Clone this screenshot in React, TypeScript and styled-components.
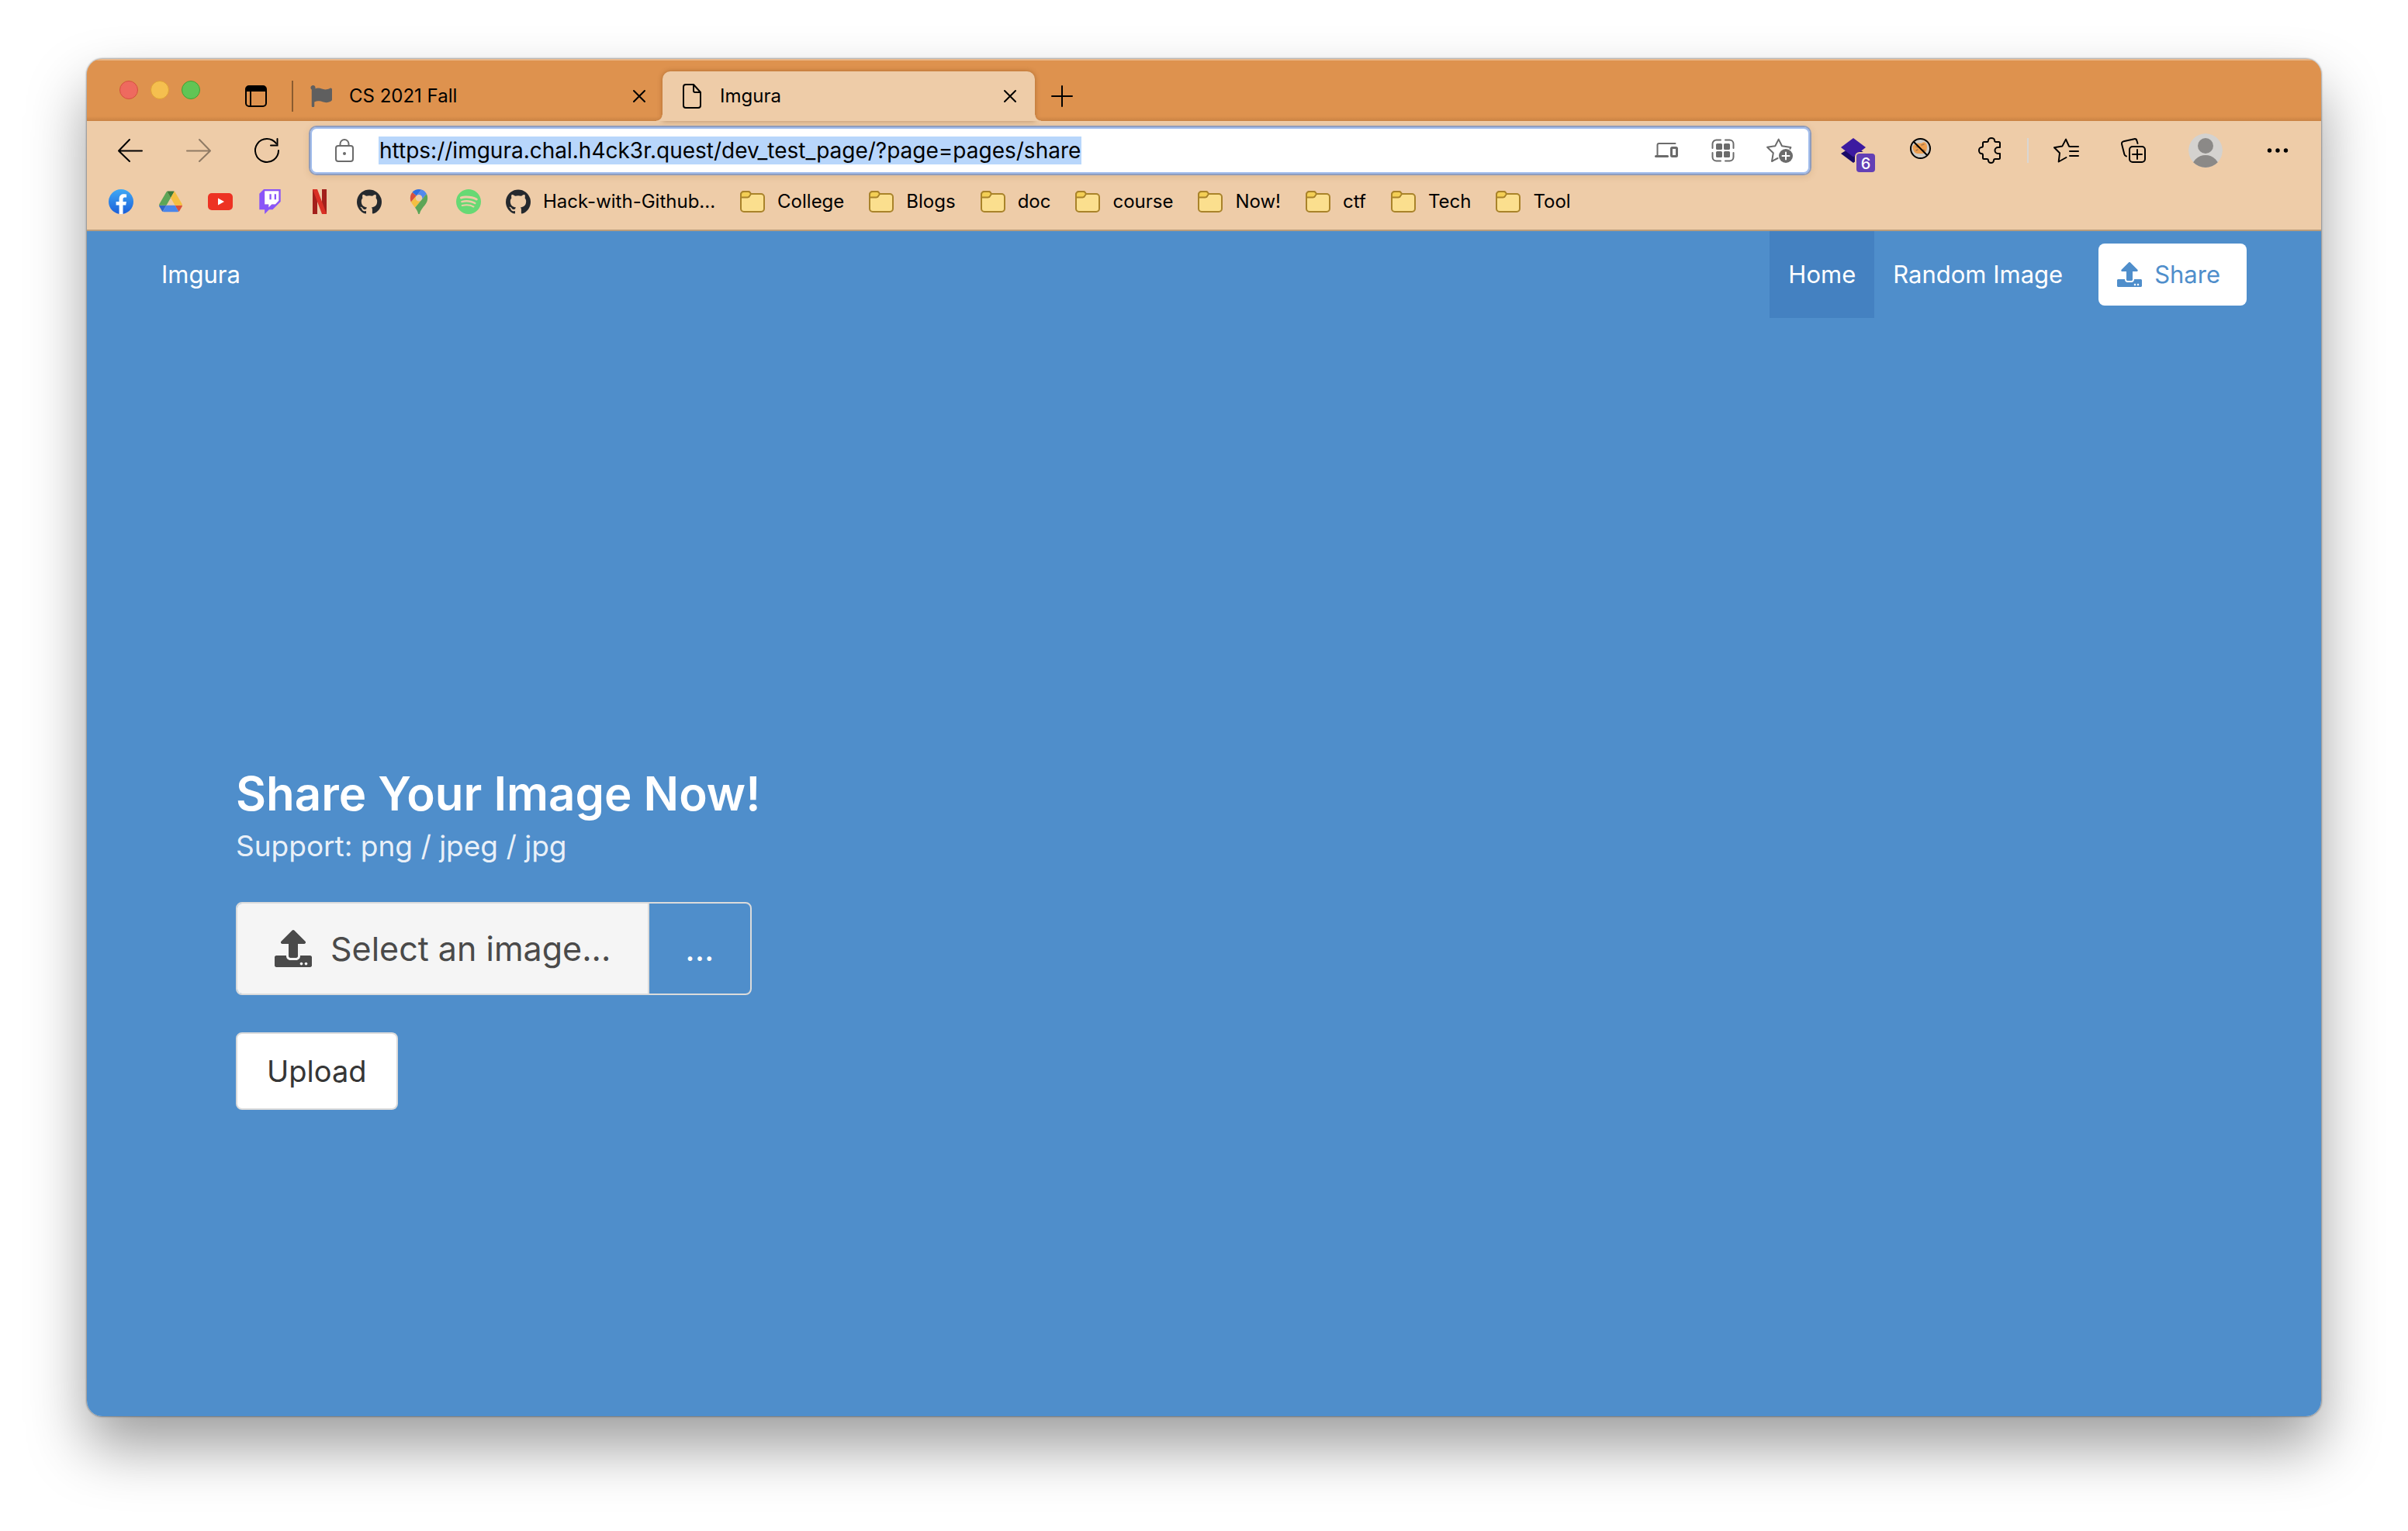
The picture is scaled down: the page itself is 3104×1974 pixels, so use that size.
import React from 'react';
import styled, { createGlobalStyle, css } from 'styled-components';
import { FaFlag, FaUpload } from 'react-icons/fa';
import { SiGithub, SiSpotify } from 'react-icons/si';

const GlobalStyle = createGlobalStyle`
  *, *::before, *::after { box-sizing: border-box; }
  body { margin: 0; background: #fff; font-family: Inter, "Liberation Sans", sans-serif; color: #000; }
  button, input { font: inherit; color: inherit; }
  button { border: 0; padding: 0; background: none; cursor: pointer; }
  a { color: inherit; text-decoration: none; }
  svg { display: block; flex: none; }
`;

const Desktop = styled.div`
  min-height: 100vh;
  display: flex;
  padding: 76px 112px 148px;
`;

const Window = styled.div`
  flex: 1;
  min-width: 0;
  display: flex;
  flex-direction: column;
  overflow: hidden;
  border-radius: 20px;
  box-shadow: 0 0 2px 1px rgba(0, 0, 0, 0.32), 0 40px 76px rgba(0, 0, 0, 0.38);
`;

/* ---- Title bar and tabs ---- */

const TitleBar = styled.header`
  height: 80px;
  display: flex;
  align-items: flex-end;
  padding-left: 42px;
  background: linear-gradient(#de924e 74px, #c98343) #de924e;
  box-shadow: inset 0 2px 0 rgba(255, 255, 255, 0.35);
`;

const Lights = styled.div`
  display: flex;
  align-self: center;
  gap: 16px;
  margin-right: 58px;
`;

const Light = styled.button<{ $fill: string; $edge: string }>`
  width: 24px;
  height: 24px;
  border-radius: 50%;
  background: ${(p) => p.$fill};
  border: 1px solid ${(p) => p.$edge};
`;

const BarButton = styled.button`
  height: 64px;
  display: flex;
  align-items: center;
`;

const TabDivider = styled.span`
  width: 2px;
  height: 40px;
  margin: 0 0 12px 32px;
  background: #8a5b30;
`;

const Tab = styled.div<{ $active?: boolean }>`
  position: relative;
  width: 476px;
  height: 64px;
  display: flex;
  align-items: center;
  gap: 20px;
  padding: 0 22px 0 20px;
  font-size: 24px;
  line-height: 32px;
  ${(p) =>
    p.$active &&
    css`
      width: 480px;
      padding: 0 24px 0 22px;
      background: #eecca8;
      border-radius: 10px 10px 0 0;
      box-shadow: 0 0 6px rgba(110, 60, 10, 0.45);
      &::before,
      &::after {
        content: '';
        position: absolute;
        bottom: 0;
        width: 8px;
        height: 8px;
      }
      &::before {
        left: -8px;
        background: radial-gradient(circle at 0 0, transparent 7px, #eecca8 8px);
      }
      &::after {
        right: -8px;
        background: radial-gradient(circle at 100% 0, transparent 7px, #eecca8 8px);
      }
    `}
`;

const TabIcon = styled.span`
  width: 32px;
  display: flex;
  justify-content: center;
`;

const TabLabel = styled.span`
  flex: 1;
`;

const NewTab = styled(BarButton)`
  margin-left: 21px;
`;

/* ---- Toolbar ---- */

const Chrome = styled.div`
  background: #eecca8;
  border-bottom: 2px solid #b99c7c;
  padding-bottom: 8px;
`;

const Toolbar = styled.div`
  height: 76px;
  display: flex;
  align-items: center;
  padding: 0 40px;
`;

const NavButtons = styled.div`
  display: flex;
  gap: 56px;
  margin-right: 38px;
`;

const AddressBar = styled.form`
  flex: 1;
  min-width: 0;
  height: 64px;
  display: flex;
  align-items: center;
  padding: 0 22px 0 32px;
  background: #fff;
  border: 2px solid #8f9cbc;
  border-radius: 10px;
  box-shadow: inset 0 0 0 2px #a0bcec, 0 2px 8px rgba(120, 80, 30, 0.15);
`;

const AddressField = styled.label`
  flex: 1;
  min-width: 0;
  display: flex;
  align-items: center;
  gap: 32px;
`;

const AddressInput = styled.input`
  field-sizing: content;
  height: 36px;
  padding: 0 1px;
  border: 0;
  outline: 0;
  background: #b8d6fb;
  font-size: 28px;
  line-height: 36px;
`;

const AddressActions = styled.div`
  display: flex;
  gap: 42px;
`;

const Extensions = styled.div`
  display: flex;
  align-items: center;
  gap: 56px;
  margin-left: 38px;
`;

const ToolDivider = styled.span`
  width: 2px;
  height: 32px;
  margin: 0 32px;
  background: #d9d7d3;
`;

const Tools = styled.div`
  display: flex;
  align-items: center;
  gap: 55px;
`;

const BadgeHost = styled.button`
  position: relative;
`;

const Badge = styled.span`
  position: absolute;
  left: 20px;
  top: 20px;
  width: 24px;
  height: 24px;
  border-radius: 4px;
  background: #6340b5;
  box-shadow: 0 0 0 2px #eecca8;
  color: #fff;
  font-size: 20px;
  font-weight: 500;
  line-height: 26px;
  text-align: center;
`;

const Bookmarks = styled.nav`
  height: 56px;
  display: flex;
  align-items: center;
  gap: 32px;
  padding: 0 28px;
  font-size: 24px;
  line-height: 32px;
  white-space: nowrap;
`;

const Bookmark = styled.a`
  display: flex;
  align-items: center;
  gap: 16px;
`;

/* ---- Web page ---- */

const Page = styled.div`
  flex: 1;
  display: flex;
  flex-direction: column;
  background: #4f8ecb;
  color: #fff;
`;

const Navbar = styled.nav`
  height: 112px;
  display: flex;
  align-items: center;
  justify-content: space-between;
  padding: 0 96px;
  font-size: 31px;
  line-height: 48px;
`;

const NavMenu = styled.div`
  display: flex;
  align-items: center;
`;

const NavItem = styled.a<{ $active?: boolean }>`
  height: 112px;
  display: flex;
  align-items: center;
  padding: 0 24px;
  background: ${(p) => (p.$active ? '#4481c1' : 'transparent')};
`;

const ShareLink = styled.a`
  height: 80px;
  display: flex;
  align-items: center;
  gap: 16px;
  margin-left: 22px;
  padding: 0 34px 0 24px;
  border-radius: 8px;
  background: #fff;
  color: #4f8ecb;
`;

const Hero = styled.main`
  flex: 1;
  display: flex;
  flex-direction: column;
  justify-content: center;
  align-items: flex-start;
  padding: 182px 192px 0;
`;

const Title = styled.h1`
  margin: 0 0 8px;
  font-size: 60px;
  font-weight: 600;
  line-height: 72px;
`;

const Subtitle = styled.p`
  margin: 0;
  font-size: 37px;
  line-height: 48px;
  color: rgba(255, 255, 255, 0.9);
`;

const UploadForm = styled.form`
  display: flex;
  flex-direction: column;
  align-items: flex-start;
  gap: 48px;
  margin-top: 48px;
`;

const FilePicker = styled.label`
  position: relative;
  height: 120px;
  display: flex;
  border: 2px solid #dbdbdb;
  border-radius: 8px;
  overflow: hidden;
  font-size: 43px;
  line-height: 64px;
  cursor: pointer;
`;

const FileInput = styled.input`
  position: absolute;
  inset: 0;
  opacity: 0;
  cursor: pointer;
`;

const FileCta = styled.span`
  display: flex;
  align-items: center;
  gap: 24px;
  padding: 0 48px;
  background: #f5f5f5;
  color: #4a4a4a;
`;

const FileName = styled.span`
  display: flex;
  align-items: center;
  padding: 0 46px;
  border-left: 2px solid #dbdbdb;
`;

const UploadButton = styled.button`
  height: 100px;
  padding: 0 38px;
  border: 2px solid #dbdbdb;
  border-radius: 8px;
  background: #fff;
  color: #363636;
  font-size: 38px;
  line-height: 60px;
`;

/* ---- Icons ---- */

type IconProps = { w?: number; h?: number; box?: string; color?: string; sw?: number; children: React.ReactNode };
const Icon = ({ w = 32, h = 32, box, color = '#000', sw = 2, children }: IconProps) => (
  <svg width={w} height={h} viewBox={box ?? `0 0 ${w} ${h}`} fill="none" stroke={color} strokeWidth={sw}
    strokeLinecap="round" strokeLinejoin="round" overflow="visible" aria-hidden="true">
    {children}
  </svg>
);

const CloseIcon = () => <Icon w={16} h={16}><path d="M1 1l14 14M15 1L1 15" /></Icon>;
const TabsIcon = () => (
  <Icon w={28} h={28}>
    <rect x="1" y="1" width="26" height="26" rx="4" />
    <path d="M1 8V5a4 4 0 0 1 4-4h18a4 4 0 0 1 4 4v3z" fill="#000" stroke="none" />
    <path d="M1 7h26" /><path d="M7 7v20" />
  </Icon>
);
const FileIcon = () => <Icon><path d="M8 1h10l9 10v17a3 3 0 0 1-3 3H8a3 3 0 0 1-3-3V4a3 3 0 0 1 3-3zM18 1.500v7.500a2 2 0 0 0 2 2h7" /></Icon>;
const BackIcon = () => <Icon><path d="M31 16.500H1M15 2L1 16.500 15 30" /></Icon>;
const ForwardIcon = () => <Icon color="#8f7a64"><path d="M1 16.500h30M17 2l14 14.500L17 30" /></Icon>;
const RefreshIcon = () => <Icon><path d="M31 16A15 15 0 1 1 28 7" /><path d="M29.500 1v8.500H21" strokeLinejoin="miter" /></Icon>;
const LockIcon = () => (
  <Icon w={24} h={30} color="#6b6b6b">
    <rect x="1" y="9" width="22" height="20" rx="3" />
    <path d="M6.500 9V6.500a5.500 5.500 0 0 1 11 0V9" />
    <circle cx="12" cy="19" r="2" fill="#6b6b6b" stroke="none" />
  </Icon>
);
const DevicesIcon = () => (
  <Icon color="#6b6b6b">
    <path d="M5.500 23V9a2 2 0 0 1 2-2h21" />
    <path d="M3.500 23.500h15" strokeWidth="3" />
    <rect x="23.500" y="12.500" width="7" height="11" rx="1" strokeWidth="3" />
  </Icon>
);
const GridIcon = () => (
  <Icon color="#6b6b6b">
    <path d="M2.500 13V7.500a5 5 0 0 1 5-5H13M19 2.500h5.500a5 5 0 0 1 5 5V13M29.500 19v5.500a5 5 0 0 1-5 5H19M13 29.500H7.500a5 5 0 0 1-5-5V19" />
    <g fill="#6b6b6b" stroke="none">
      <rect x="7" y="7" width="8" height="8" rx="1.500" /><rect x="17" y="7" width="8" height="8" rx="1.500" />
      <rect x="7" y="17" width="8" height="8" rx="1.500" /><rect x="17" y="17" width="8" height="8" rx="1.500" />
    </g>
  </Icon>
);
const StarAddIcon = () => (
  <Icon color="#6b6b6b">
    <path d="M28.500 13.800l.8-1.800L18 10.300 13.700 1.600 9.300 10.300-.9 11.800 6.800 19.300 5 30l7.500-4" />
    <circle cx="23" cy="23" r="9" fill="#6b6b6b" stroke="none" />
    <path d="M23 18.500v9M18.500 23h9" stroke="#fff" />
  </Icon>
);
const LayersIcon = () => (
  <Icon>
    <path d="M0 20l16-10 16 10-16 12z" fill="#190a66" stroke="none" />
    <path d="M0 12L16 0l16 12-16 12.500z" fill="#3c1aa0" stroke="none" />
  </Icon>
);
const CookieIcon = () => (
  <Icon>
    <circle cx="14.500" cy="13.500" r="12.500" fill="#cfcac2" />
    <path d="M6 9c3-4 8-1 11-3s6 1 6 5-1 9-6 9-9 1-11-3-2-6 0-8z" fill="#ee9f4f" stroke="none" />
    <path d="M9 11l3 1M16 9l3-1M9 16l2-1M18 15l2 1" stroke="#a8794d" strokeWidth="1.500" />
    <path d="M6 5l17 17" />
  </Icon>
);
const PuzzleIcon = () => (
  <Icon>
    <path d="M8.500 5H12a2 2 0 0 0 2-2 4 3 0 0 1 8 0 2 2 0 0 0 2 2h3.500A1.500 1.500 0 0 1 29 6.500V12h-2.500a4 4 0 0 0 0 8H29v5.500a1.500 1.500 0 0 1-1.500 1.500H23a2 2 0 0 0-2 2 3.500 3 0 0 1-7 0 2 2 0 0 0-2-2H8.500A1.500 1.500 0 0 1 7 25.500V22a2 2 0 0 0-2-2 3 4 0 0 1 0-8 2 2 0 0 0 2-2V6.500A1.500 1.500 0 0 1 8.500 5z" />
  </Icon>
);
const FavoritesIcon = () => <Icon><path d="M20 10.500L16 1.600l-4.700 9L1 12.300l7 7L6.700 30.500 16.500 25M21 11h11M21 17h11M21 23h11" /></Icon>;
const CollectionsIcon = () => (
  <Icon>
    <path d="M21.500 7l-1-3.500A3 3 0 0 0 17 1.200L3.400 4.200A3 3 0 0 0 1.100 8l3.300 13a3.500 3.500 0 0 0 2.600 2.500" />
    <rect x="11" y="11" width="20" height="20" rx="4" /><path d="M21 15v12M15 21h12" />
  </Icon>
);
const AvatarIcon = () => (
  <Icon w={44} h={44}>
    <clipPath id="avatar"><circle cx="22" cy="22" r="22" /></clipPath>
    <g clipPath="url(#avatar)" stroke="none">
      <circle cx="22" cy="22" r="22" fill="#d4d2cf" />
      <circle cx="22" cy="16" r="10" fill="#8b8987" />
      <ellipse cx="22" cy="46" rx="18" ry="18" fill="#8b8987" />
    </g>
  </Icon>
);
const MoreIcon = () => (
  <Icon><g fill="#000" stroke="none"><circle cx="5.500" cy="16" r="2.700" /><circle cx="16" cy="16" r="2.700" /><circle cx="26.500" cy="16" r="2.700" /></g></Icon>
);
const FolderIcon = () => (
  <Icon h={28} color="#a9832a">
    <path d="M5 27h22a4 4 0 0 0 4-4V8a4 4 0 0 0-4-4H14l-1.500-2a2.500 2.500 0 0 0-2-1H5a4 4 0 0 0-4 4v18a4 4 0 0 0 4 4z" fill="#fbdf8e" />
    <path d="M1 8.500h8.500a3 3 0 0 0 2.300-1.200L14 4l-1.500-2a2.500 2.500 0 0 0-2-1H5a4 4 0 0 0-4 4z" fill="#f4cf55" />
  </Icon>
);
const FacebookIcon = () => (
  <Icon>
    <linearGradient id="fb" x1="0" y1="0" x2="0" y2="1"><stop stopColor="#3fa9f5" /><stop offset="1" stopColor="#1b5fd9" /></linearGradient>
    <circle cx="16" cy="16" r="16" fill="url(#fb)" stroke="none" />
    <path d="M22.200 20.600l.7-4.600h-4.400v-3c0-1.300.6-2.500 2.600-2.500h2V6.600s-1.800-.3-3.500-.3c-3.600 0-6 2.200-6 6.200V16h-4v4.600h4V32h4.900V20.600z" fill="#fff" stroke="none" />
  </Icon>
);
const DriveIcon = () => (
  <Icon box="-3 -7 93 93"><g stroke="none">
    <path fill="#2f65c8" d="m6.600 66.850 3.850 6.650c.8 1.400 1.950 2.500 3.300 3.300l13.750-23.800h-27.500c0 1.550.4 3.100 1.200 4.500z" />
    <path fill="#5ca557" d="m43.650 25-13.750-23.800c-1.350.8-2.500 1.900-3.300 3.300l-25.400 44a9.060 9.060 0 0 0 -1.200 4.500h27.500z" />
    <path fill="#d9513c" d="m73.550 76.800c1.350-.8 2.500-1.900 3.300-3.300l1.600-2.750 7.650-13.250c.8-1.400 1.200-2.950 1.200-4.500h-27.502l5.852 11.500z" />
    <path fill="#3a7a3a" d="m43.650 25 13.750-23.800c-1.350-.8-2.900-1.200-4.500-1.200h-18.500c-1.600 0-3.150.45-4.500 1.200z" />
    <path fill="#4a86ea" d="m59.800 53h-32.300l-13.750 23.800c1.350.8 2.900 1.200 4.500 1.200h50.800c1.600 0 3.150-.45 4.500-1.200z" />
    <path fill="#f5bf42" d="m73.400 26.500-12.700-22c-.8-1.400-1.950-2.500-3.300-3.300l-13.750 23.800 16.150 28h27.450c0-1.550-.4-3.100-1.200-4.500z" />
  </g></Icon>
);
const YoutubeIcon = () => (
  <Icon><g stroke="none"><rect y="5" width="32" height="22" rx="5" fill="#ed3223" /><path d="M13 11.500l8 4.500-8 4.500z" fill="#fff" /></g></Icon>
);
const TwitchIcon = () => (
  <Icon box="-200 0 2800 2800"><g stroke="none">
    <path fill="#fff" d="M2200 1300l-400 400h-400l-350 350v-350H600V200h1600z" />
    <path fill="#8a55f8" d="M500 0L0 500v1800h600v500l500-500h400l900-900V0zm1700 1300l-400 400h-400l-350 350v-350H600V200h1600zM1700 550h200v600h-200zM1150 550h200v600h-200z" />
  </g></Icon>
);
const NetflixIcon = () => (
  <Icon><g stroke="none"><path fill="#a3201b" d="M7 0h6v32H7zM19 0h6v32h-6z" /><path fill="#d93025" d="M7 0h6l12 32h-6z" /></g></Icon>
);
const MapsIcon = () => (
  <Icon box="-20 0 132.300 132.300"><g stroke="none">
    <path fill="#2f6fe0" d="M60.200 2.200C55.800.8 51 0 46.100 0 32 0 19.300 6.400 10.800 16.500l21.800 18.300L60.200 2.200z" />
    <path fill="#d9513c" d="M10.800 16.500C4.100 24.500 0 34.900 0 46.100c0 8.700 1.700 15.700 4.600 22l28-33.300-21.800-18.300z" />
    <path fill="#5189ee" d="M46.200 28.500c9.800 0 17.700 7.900 17.700 17.700 0 4.300-1.600 8.300-4.200 11.400 0 0 13.900-16.600 27.500-32.700-5.600-10.800-15.300-19-27-22.700L32.600 34.800c3.300-3.800 8.100-6.300 13.600-6.300" />
    <path fill="#f5bf42" d="M46.200 63.800c-9.800 0-17.700-7.900-17.700-17.700 0-4.300 1.500-8.300 4.100-11.300l-28 33.300c4.800 10.600 12.800 19.200 21 29.900l34.100-40.500c-3.300 3.900-8.100 6.300-13.500 6.300" />
    <path fill="#5ca557" d="M59.100 109.200c15.400-24.100 33.300-35 33.300-63 0-7.700-1.900-14.900-5.200-21.300L25.600 98c2.600 3.400 5.300 7.300 7.900 11.300 9.400 14.500 6.800 23.100 12.800 23.100s3.400-8.700 12.800-23.200" />
  </g></Icon>
);

const sites = [
  { name: 'Facebook', icon: <FacebookIcon /> },
  { name: 'Google Drive', icon: <DriveIcon /> },
  { name: 'YouTube', icon: <YoutubeIcon /> },
  { name: 'Twitch', icon: <TwitchIcon /> },
  { name: 'Netflix', icon: <NetflixIcon /> },
  { name: 'GitHub', icon: <SiGithub size={32} color="#25292e" /> },
  { name: 'Google Maps', icon: <MapsIcon /> },
  { name: 'Spotify', icon: <SiSpotify size={32} color="#67d974" /> },
];
const folders = ['College', 'Blogs', 'doc', 'course', 'Now!', 'ctf', 'Tech', 'Tool'];

export default function App() {
  return (
    <>
      <GlobalStyle />
      <Desktop>
        <Window>
          <TitleBar>
            <Lights>
              <Light aria-label="Close window" $fill="#ee6a5f" $edge="#d5503f" />
              <Light aria-label="Minimize window" $fill="#f5bf4f" $edge="#dfa035" />
              <Light aria-label="Zoom window" $fill="#61c555" $edge="#43a234" />
            </Lights>
            <BarButton aria-label="Tab actions"><TabsIcon /></BarButton>
            <TabDivider />
            <Tab>
              <TabIcon><FaFlag size={28} color="#5f5f5f" /></TabIcon>
              <TabLabel>CS 2021 Fall</TabLabel>
              <button aria-label="Close CS 2021 Fall"><CloseIcon /></button>
            </Tab>
            <Tab $active>
              <TabIcon><FileIcon /></TabIcon>
              <TabLabel>Imgura</TabLabel>
              <button aria-label="Close Imgura"><CloseIcon /></button>
            </Tab>
            <NewTab aria-label="New tab"><Icon w={28} h={28}><path d="M14 1v26M1 14h26" /></Icon></NewTab>
          </TitleBar>

          <Chrome>
            <Toolbar>
              <NavButtons>
                <button aria-label="Back"><BackIcon /></button>
                <button aria-label="Forward"><ForwardIcon /></button>
                <button aria-label="Refresh"><RefreshIcon /></button>
              </NavButtons>
              <AddressBar>
                <AddressField>
                  <LockIcon />
                  <AddressInput aria-label="Address" defaultValue="https://imgura.chal.h4ck3r.quest/dev_test_page/?page=pages/share" />
                </AddressField>
                <AddressActions>
                  <button type="button" aria-label="Send to devices"><DevicesIcon /></button>
                  <button type="button" aria-label="QR code"><GridIcon /></button>
                  <button type="button" aria-label="Add to favorites"><StarAddIcon /></button>
                </AddressActions>
              </AddressBar>
              <Extensions>
                <BadgeHost aria-label="Layers extension"><LayersIcon /><Badge>6</Badge></BadgeHost>
                <button aria-label="Cookie extension"><CookieIcon /></button>
                <button aria-label="Extensions"><PuzzleIcon /></button>
              </Extensions>
              <ToolDivider />
              <Tools>
                <button aria-label="Favorites"><FavoritesIcon /></button>
                <button aria-label="Collections"><CollectionsIcon /></button>
                <button aria-label="Profile"><AvatarIcon /></button>
                <button aria-label="Settings and more"><MoreIcon /></button>
              </Tools>
            </Toolbar>
            <Bookmarks aria-label="Bookmarks">
              {sites.map((s) => (
                <Bookmark key={s.name} href="#" aria-label={s.name}>{s.icon}</Bookmark>
              ))}
              <Bookmark href="#"><SiGithub size={32} color="#25292e" />Hack-with-Github...</Bookmark>
              {folders.map((f) => (
                <Bookmark key={f} href="#"><FolderIcon />{f}</Bookmark>
              ))}
            </Bookmarks>
          </Chrome>

          <Page>
            <Navbar>
              <a href="#">Imgura</a>
              <NavMenu>
                <NavItem href="#" $active>Home</NavItem>
                <NavItem href="#">Random Image</NavItem>
                <ShareLink href="#"><FaUpload size={32} />Share</ShareLink>
              </NavMenu>
            </Navbar>
            <Hero>
              <Title>Share Your Image Now!</Title>
              <Subtitle>Support: png / jpeg / jpg</Subtitle>
              <UploadForm>
                <FilePicker>
                  <FileInput type="file" name="image" />
                  <FileCta><FaUpload size={48} />Select an image...</FileCta>
                  <FileName>...</FileName>
                </FilePicker>
                <UploadButton type="submit">Upload</UploadButton>
              </UploadForm>
            </Hero>
          </Page>
        </Window>
      </Desktop>
    </>
  );
}
